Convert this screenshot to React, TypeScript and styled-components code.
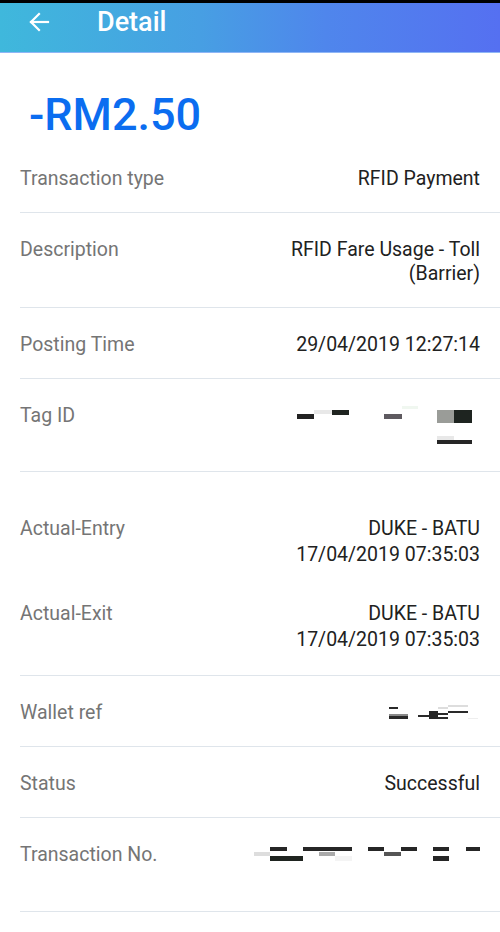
import React from 'react';
import styled, { createGlobalStyle } from 'styled-components';

const Global = createGlobalStyle`
    html, body {
        margin: 0;
        padding: 0;
        background: #FFFFFF;
        font-family: Roboto, 'Noto Sans', 'Liberation Sans', sans-serif;
    }
    * { box-sizing: border-box; }
`;

// 전체 페이지
const Page = styled.div`
    width: 500px;
    min-height: 932px;
    background: #FFFFFF;
    display: flex;
    flex-direction: column;
`;

// 맨 위 검은 줄
const StatusStrip = styled.div`
    height: 3px;
    background: #000000;
`;

// 그라데이션 헤더
const Header = styled.header`
    height: 50px;
    display: flex;
    align-items: center;
    gap: 47px;
    padding: 0 0 12px 28px;
    background: linear-gradient(90deg, #3fb8dc 0%, #479fe3 40%, #4f86ec 65%, #5570f1 100%);
    border-bottom: 1px solid #8fb6f6;
`;

const BackBtn = styled.button`
    width: 22px;
    height: 22px;
    padding: 0;
    border: none;
    background: none;
    display: flex;
    cursor: pointer;
`;

const Title = styled.h1`
    margin: 0;
    color: #FFFFFF;
    font-size: 27px;
    font-weight: 500;
    line-height: 30px;
`;

// 금액
const Amount = styled.div`
    height: 89px;
    padding: 37px 0 0 29px;
    color: #0b6df0;
    font-size: 45px;
    font-weight: 500;
    line-height: 50px;
`;

const List = styled.div`
    display: flex;
    flex-direction: column;
    padding-left: 20px;
`;

// 한 줄 항목
const Row = styled.div<{ $tight?: boolean }>`
    display: flex;
    justify-content: space-between;
    align-items: flex-start;
    padding: ${p => (p.$tight ? '0 20px 0 0' : '25px 20px 21px 0')};
    border-bottom: ${p => (p.$tight ? 'none' : '1px solid #dfe5eb')};
    font-size: 19.5px;
    line-height: ${p => (p.$tight ? '25.5px' : '24px')};
`;

// 묶음 (입구/출구)
const Group = styled.div`
    display: flex;
    flex-direction: column;
    gap: 34px;
    padding: 44px 0 23px 0;
    border-bottom: 1px solid #dfe5eb;
`;

const Label = styled.div`
    color: #757575;
    white-space: nowrap;
`;

const Value = styled.div`
    color: #212121;
    text-align: right;
    max-width: 225px;
`;

const Masked = styled.svg`
    display: block;
`;

type Block = [number, number, number, number, string];

const tagBlocks: Block[] = [
    [297, 413, 17, 5, '#222222'],
    [314, 409, 18, 4, '#e8e8e8'],
    [332, 409, 17, 5, '#1f2420'],
    [384, 413, 18, 5, '#5e5a60'],
    [402, 405, 16, 3, '#f0f7f0'],
    [437, 409, 17, 13, '#9a9c98'],
    [454, 409, 18, 13, '#1e2420'],
    [437, 435, 17, 4, '#e8e8e8'],
    [437, 439, 35, 4, '#262626'],
];

const walletBlocks: Block[] = [
    [389, 705, 9, 2, '#2a2a2a'],
    [389, 712, 19, 2, '#8a8a8a'],
    [389, 714, 19, 3, '#2a2a2a'],
    [418, 713, 12, 2, '#2a2a2a'],
    [429, 709, 9, 8, '#262626'],
    [438, 705, 10, 2, '#dddddd'],
    [438, 711, 10, 2, '#2a2a2a'],
    [438, 715, 10, 2, '#2a2a2a'],
    [448, 703, 20, 2, '#dddddd'],
    [448, 709, 20, 2, '#2a2a2a'],
    [468, 716, 10, 1, '#eeeeee'],
];

const txBlocks: Block[] = [
    [254, 850, 16, 4, '#dddddd'],
    [270, 845, 17, 4, '#262626'],
    [270, 854, 33, 5, '#1f2420'],
    [303, 845, 49, 4, '#262626'],
    [319, 850, 16, 4, '#aaaaaa'],
    [335, 854, 17, 5, '#f4f4f4'],
    [368, 845, 16, 4, '#262626'],
    [384, 850, 17, 4, '#555555'],
    [401, 845, 16, 4, '#262626'],
    [433, 845, 16, 4, '#262626'],
    [433, 854, 16, 5, '#262626'],
    [466, 845, 16, 4, '#262626'],
];

// 가려진 값 (좌표는 화면 기준)
function Redacted({ box, blocks }: { box: [number, number, number, number]; blocks: Block[] }) {
    return (
        <Masked width={box[2]} height={box[3]} viewBox={box.join(' ')}>
            {blocks.map((b, i) => (
                <rect key={i} x={b[0]} y={b[1]} width={b[2]} height={b[3]} fill={b[4]} />
            ))}
        </Masked>
    );
}

export default function App(): JSX.Element {
    return (
        <>
            <Global />
            <Page>
                <StatusStrip />
                <Header>
                    <BackBtn aria-label="back">
                        <svg width="22" height="22" viewBox="0 0 22 22" fill="none" stroke="#FFFFFF" strokeWidth="2.2" strokeLinecap="square">
                            <path d="M3 11H20" />
                            <path d="M11 3L3 11L11 19" />
                        </svg>
                    </BackBtn>
                    <Title>Detail</Title>
                </Header>

                <Amount>-RM2.50</Amount>

                <List>
                    <Row>
                        <Label>Transaction type</Label>
                        <Value>RFID Payment</Value>
                    </Row>
                    <Row>
                        <Label>Description</Label>
                        <Value>RFID Fare Usage - Toll (Barrier)</Value>
                    </Row>
                    <Row>
                        <Label>Posting Time</Label>
                        <Value>29/04/2019 12:27:14</Value>
                    </Row>
                    <Row>
                        <Label>Tag ID</Label>
                        <Redacted box={[290, 403, 190, 46]} blocks={tagBlocks} />
                    </Row>
                    <Group>
                        <Row $tight>
                            <Label>Actual-Entry</Label>
                            <Value>DUKE - BATU<br />17/04/2019 07:35:03</Value>
                        </Row>
                        <Row $tight>
                            <Label>Actual-Exit</Label>
                            <Value>DUKE - BATU<br />17/04/2019 07:35:03</Value>
                        </Row>
                    </Group>
                    <Row>
                        <Label>Wallet ref</Label>
                        <Redacted box={[380, 699, 100, 24]} blocks={walletBlocks} />
                    </Row>
                    <Row>
                        <Label>Status</Label>
                        <Value>Successful</Value>
                    </Row>
                    <Row>
                        <Label>Transaction No.</Label>
                        <Redacted box={[250, 841, 230, 47]} blocks={txBlocks} />
                    </Row>
                </List>
            </Page>
        </>
    );
}
